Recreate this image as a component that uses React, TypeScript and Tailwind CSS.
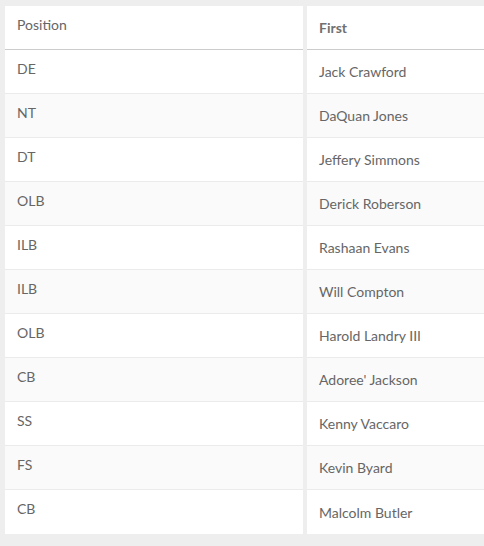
import React from "react";

const rows: [string, string][] = [
  ["DE", "Jack Crawford"],
  ["NT", "DaQuan Jones"],
  ["DT", "Jeffery Simmons"],
  ["OLB", "Derick Roberson"],
  ["ILB", "Rashaan Evans"],
  ["ILB", "Will Compton"],
  ["OLB", "Harold Landry III"],
  ["CB", "Adoree' Jackson"],
  ["SS", "Kenny Vaccaro"],
  ["FS", "Kevin Byard"],
  ["CB", "Malcolm Butler"],
];

export default function App() {
  return (
    <div className="w-[484px] h-[546px] bg-[#eeeeee] overflow-hidden pt-[6px] pl-[5px] text-[14px] text-[#666666]" style={{ fontFamily: "Lato, 'Open Sans', sans-serif" }}>
      <div className="flex gap-[4px]">
        <div className="w-[298px] shrink-0 bg-white">
          <div className="h-[44px] border-b border-[#cccccc] pl-[12px] pt-[9px] leading-[20px]">Position</div>
          {rows.map(([p], i) => (
            <div key={i} className={`h-[44px] pl-[12px] pt-[9px] leading-[20px] ${i < rows.length - 1 ? "border-b border-[#ebebeb]" : ""} ${i % 2 === 1 ? "bg-[#fafafa]" : "bg-white"}`}>
              {p}
            </div>
          ))}
        </div>
        <div className="w-[298px] shrink-0 bg-white">
          <div className="h-[44px] border-b border-[#cccccc] pl-[12px] flex items-center font-bold text-[#707070]">First</div>
          {rows.map(([, n], i) => (
            <div key={i} className={`h-[44px] pl-[12px] flex items-center ${i < rows.length - 1 ? "border-b border-[#ebebeb]" : ""} ${i % 2 === 1 ? "bg-[#fafafa]" : "bg-white"}`}>
              {n}
            </div>
          ))}
        </div>
      </div>
    </div>
  );
}
